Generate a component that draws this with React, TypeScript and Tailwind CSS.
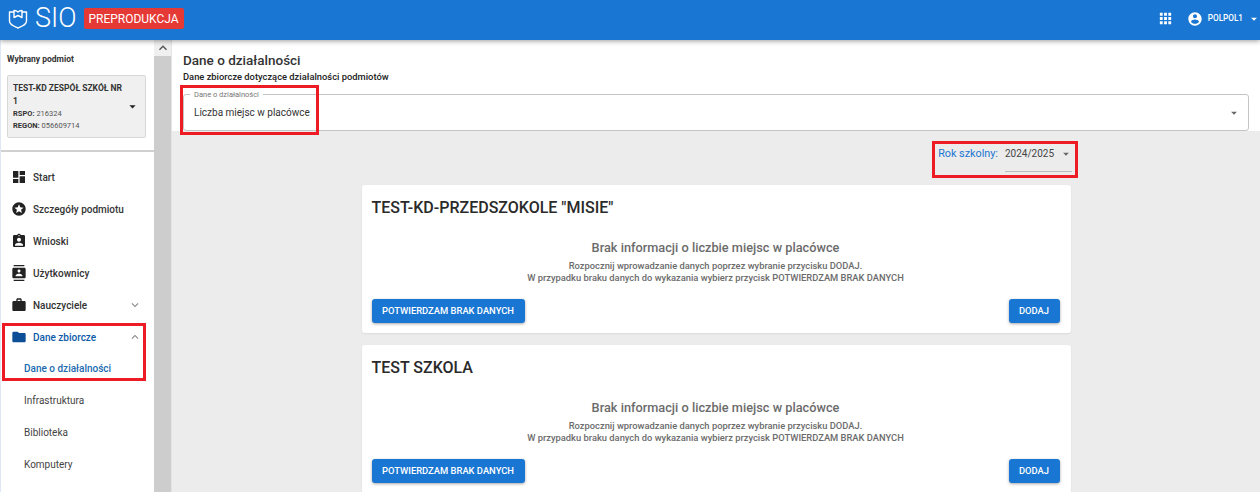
import { ReactNode } from 'react'

const icons = {
  dashboard: 'M3 13h8V3H3v10zm0 8h8v-6H3v6zm10 0h8V11h-8v10zm0-18v6h8V3h-8z',
  stars:
    'M11.99 2C6.47 2 2 6.48 2 12s4.47 10 9.99 10C17.52 22 22 17.52 22 12S17.52 2 11.99 2zm4.24 16L12 15.45 7.77 18l1.12-4.81-3.73-3.23 4.92-.42L12 5l1.92 4.53 4.92.42-3.73 3.23L16.23 18z',
  assignment:
    'M19 3h-4.18C14.4 1.84 13.3 1 12 1c-1.3 0-2.4.84-2.82 2H5c-1.1 0-2 .9-2 2v14c0 1.1.9 2 2 2h14c1.1 0 2-.9 2-2V5c0-1.1-.9-2-2-2zm-7 0c.55 0 1 .45 1 1s-.45 1-1 1-1-.45-1-1 .45-1 1-1zm0 4c1.66 0 3 1.34 3 3s-1.34 3-3 3-3-1.34-3-3 1.34-3 3-3zm6 12H6v-1.4c0-2 4-3.1 6-3.1s6 1.1 6 3.1V19z',
  contacts:
    'M20 0H4v2h16V0zM4 24h16v-2H4v2zM20 4H4c-1.1 0-2 .9-2 2v12c0 1.1.9 2 2 2h16c1.1 0 2-.9 2-2V6c0-1.1-.9-2-2-2zm-8 2.75c1.24 0 2.25 1.01 2.25 2.25s-1.01 2.25-2.25 2.25S9.75 10.24 9.75 9 10.76 6.75 12 6.75zM17 17H7v-1.5c0-1.67 3.33-2.5 5-2.5s5 .83 5 2.5V17z',
  work: 'M20 6h-4V4c0-1.11-.89-2-2-2h-4c-1.11 0-2 .89-2 2v2H4c-1.11 0-1.99.89-1.99 2L2 19c0 1.11.89 2 2 2h16c1.11 0 2-.89 2-2V8c0-1.11-.89-2-2-2zm-6 0h-4V4h4v2z',
  folder: 'M10 4H4c-1.1 0-1.99.9-1.99 2L2 18c0 1.1.9 2 2 2h16c1.1 0 2-.9 2-2V8c0-1.1-.9-2-2-2h-8l-2-2z',
  apps: 'M4 8h4V4H4v4zm6 12h4v-4h-4v4zm-6 0h4v-4H4v4zm0-6h4v-4H4v4zm6 0h4v-4h-4v4zm6-10v4h4V4h-4zm-6 4h4V4h-4v4zm6 6h4v-4h-4v4zm0 6h4v-4h-4v4z',
  account:
    'M12 2C6.48 2 2 6.48 2 12s4.48 10 10 10 10-4.48 10-10S17.52 2 12 2zm0 3c1.66 0 3 1.34 3 3s-1.34 3-3 3-3-1.34-3-3 1.34-3 3-3zm0 14.2c-2.5 0-4.71-1.28-6-3.22.03-1.99 4-3.08 6-3.08 1.99 0 5.97 1.09 6 3.08-1.29 1.94-3.5 3.22-6 3.22z',
  drop: 'M7 10l5 5 5-5z',
  up: 'M12 8l-6 6 1.41 1.41L12 10.83l4.59 4.58L18 14z',
  down: 'M16.59 8.59L12 13.17 7.41 8.59 6 10l6 6 6-6z',
}

function Icon({ d, className }: { d: string; className?: string }) {
  return (
    <svg viewBox="0 0 24 24" fill="currentColor" className={className}>
      <path d={d} />
    </svg>
  )
}

function Logo() {
  return (
    <svg viewBox="0 0 20 20" fill="none" stroke="white" strokeWidth="1.4" strokeLinejoin="round" className="h-5 w-5">
      <path d="M6 3H1.500V12c0 4 4 5 8.500 7 4.500-2 8.500-3 8.500-7V3H14" />
      <path d="M6 1.500V8.500L10 6.500 14 8.500V1.500C12.500 1.500 11 2 10 3 9 2 7.500 1.500 6 1.500z" />
    </svg>
  )
}

function NavItem({ icon, label, chevron, active }: { icon: string; label: string; chevron?: string; active?: boolean }) {
  return (
    <div className={`flex h-8 items-center pl-[10px] pr-[12px] ${active ? 'text-[#0d5aa7]' : 'text-[#333]'}`}>
      <Icon d={icon} className={`h-[16px] w-[16px] shrink-0 ${active ? 'text-[#0d4f97]' : 'text-[#222]'}`} />
      <span className="ml-[6px] flex-1 text-[10px] font-medium">{label}</span>
      {chevron && <Icon d={chevron} className="h-[14px] w-[14px] text-[#888]" />}
    </div>
  )
}

function SubItem({ children, active }: { children: ReactNode; active?: boolean }) {
  return (
    <div className={`flex h-8 items-center pl-[23px] text-[10px] ${active ? '-mt-px font-medium text-[#1b6ab0]' : 'text-[#444]'}`}>
      {children}
    </div>
  )
}

function Sidebar() {
  return (
    <aside className="flex h-full w-[172px] shrink-0">
      <div className="w-[154px] border-l border-[#dfe7f2] bg-white">
        <div className="h-[112px] border-b-2 border-[#d0d0d0] px-[6px] pt-[14px]">
          <p className="text-[8.5px] leading-[11px] font-bold text-[#333]">Wybrany podmiot</p>
          <div className="mt-[10px] flex h-[63px] w-[139px] items-center rounded-[2px] border border-[#d8d8d8] bg-[#f0f0f0] pl-[5px] pr-[5px] text-[#333]">
            <div className="flex-1">
              <p className="text-[8.5px] leading-[13px] font-bold">TEST-KD ZESPÓŁ SZKÓŁ NR 1</p>
              <p className="text-[7.5px] leading-[12px] text-[#555]">
                <b className="text-[#333]">RSPO:</b> 216324
              </p>
              <p className="text-[7.5px] leading-[12px] text-[#555]">
                <b className="text-[#333]">REGON:</b> 056609714
              </p>
            </div>
            <Icon d={icons.drop} className="h-[15px] w-[15px] shrink-0 text-[#222]" />
          </div>
        </div>
        <nav className="pt-[9px]">
          <NavItem icon={icons.dashboard} label="Start" />
          <NavItem icon={icons.stars} label="Szczegóły podmiotu" />
          <NavItem icon={icons.assignment} label="Wnioski" />
          <NavItem icon={icons.contacts} label="Użytkownicy" />
          <NavItem icon={icons.work} label="Nauczyciele" chevron={icons.down} />
          <NavItem icon={icons.folder} label="Dane zbiorcze" chevron={icons.up} active />
          <SubItem active>Dane o działalności</SubItem>
          <SubItem>Infrastruktura</SubItem>
          <SubItem>Biblioteka</SubItem>
          <SubItem>Komputery</SubItem>
        </nav>
      </div>
      <div className="w-[18px] border-r border-[#e4e4e4] bg-[#cdcdcd]">
        <div className="flex h-[16px] justify-center bg-[#f0f0f0]">
          <Icon d={icons.up} className="h-[16px] w-[16px] text-[#555]" />
        </div>
      </div>
    </aside>
  )
}

function SchoolCard({ name }: { name: string }) {
  return (
    <section className="mb-[12px] h-[148px] shrink-0 rounded-[3px] bg-white pl-[10px] pr-[11px] pt-[13px] shadow-[0_1px_2px_rgba(0,0,0,0.08)]">
      <h2 className="text-[16px] leading-[20px] font-medium text-[#2a2a2a]">{name}</h2>
      <div className="mt-[22px] text-center text-[#6b6b6b]">
        <p className="text-[12.75px] leading-[16px] font-medium">Brak informacji o liczbie miejsc w placówce</p>
        <p className="mt-[4px] text-[9.35px] leading-[12px] font-medium">
          Rozpocznij wprowadzanie danych poprzez wybranie przycisku DODAJ.
        </p>
        <p className="text-[9.35px] leading-[12px] font-medium">
          W przypadku braku danych do wykazania wybierz przycisk POTWIERDZAM BRAK DANYCH
        </p>
      </div>
      <div className="mt-[15px] flex justify-between">
        <button className="h-6 w-[153px] rounded-[3px] bg-[#1976d2] text-[9.4px] font-medium text-white shadow-[0_1px_3px_rgba(0,0,0,0.35)]">
          POTWIERDZAM BRAK DANYCH
        </button>
        <button className="h-6 w-[51px] rounded-[3px] bg-[#1976d2] text-[9.4px] font-medium text-white shadow-[0_1px_3px_rgba(0,0,0,0.35)]">
          DODAJ
        </button>
      </div>
    </section>
  )
}

export default function App() {
  return (
    <div className="relative flex h-[492px] w-[1260px] flex-col overflow-hidden bg-[#ececec] font-['Roboto',sans-serif]">
      <header className="z-10 flex h-10 shrink-0 items-center bg-[#1976d2] pb-[3px] pl-[8px] text-white shadow-[0_1px_5px_rgba(0,0,0,0.4)]">
        <Logo />
        <span className="ml-[7px] text-[27px] leading-none font-light">SIO</span>
        <span className="ml-[7px] flex h-[21px] w-[100px] items-center justify-center rounded-[2px] bg-[#e53935] text-[12px] font-normal">
          PREPRODUKCJA
        </span>
        <Icon d={icons.apps} className="ml-auto h-[17px] w-[17px]" />
        <Icon d={icons.account} className="ml-[13px] h-[16px] w-[16px]" />
        <span className="ml-[5px] text-[8.2px] font-medium">POLPOL1</span>
        <Icon d={icons.drop} className="-mr-px ml-[4px] h-[14px] w-[14px]" />
      </header>

      <div className="flex min-h-0 flex-1">
        <Sidebar />
        <main className="min-w-0 flex-1">
          <div className="h-[91px] bg-white pl-[11px] pr-[11px] pt-[12px]">
            <h1 className="text-[13.5px] leading-[17px] font-medium text-[#333]">Dane o działalności</h1>
            <p className="mt-[1px] text-[9.35px] leading-[13px] font-medium text-[#222]">
              Dane zbiorcze dotyczące działalności podmiotów
            </p>
            <div className="relative mt-[11px] flex h-[37px] items-center rounded-[3px] border border-[#c4c4c4] pl-[10px] pr-[7px]">
              <span className="absolute -top-[5px] left-[6px] bg-white px-[4px] text-[7.5px] leading-[9px] text-[#777]">
                Dane o działalności
              </span>
              <span className="flex-1 text-[10px] text-[#333]">Liczba miejsc w placówce</span>
              <Icon d={icons.drop} className="h-[14px] w-[14px] text-[#666]" />
            </div>
          </div>

          <div className="flex h-[54px] justify-end pr-[188px] pt-[15px]">
            <span className="text-[10.8px] leading-[16px] text-[#1976d2]">Rok szkolny:</span>
            <div className="ml-[7px] flex h-[26px] w-[67px] items-start border-b border-[#bbb] text-[#444]">
              <span className="flex-1 text-[10px] leading-[16px]">2024/2025</span>
              <Icon d={icons.drop} className="-mr-[1px] mt-[1px] h-[14px] w-[14px] text-[#666]" />
            </div>
          </div>

          <div className="mx-auto w-[709px]">
            <SchoolCard name={'TEST-KD-PRZEDSZOKOLE "MISIE"'} />
            <SchoolCard name="TEST SZKOLA" />
          </div>
        </main>
      </div>

      {/* czerwone ramki z adnotacji */}
      <div className="absolute left-[180px] top-[85px] z-20 h-[50px] w-[139px] border-[3px] border-[#ed1c24]" />
      <div className="absolute left-[932px] top-[141px] z-20 h-[37px] w-[146px] border-[3px] border-[#ed1c24]" />
      <div className="absolute left-[2px] top-[323px] z-20 h-[58px] w-[144px] border-[3px] border-[#ed1c24]" />
    </div>
  )
}
